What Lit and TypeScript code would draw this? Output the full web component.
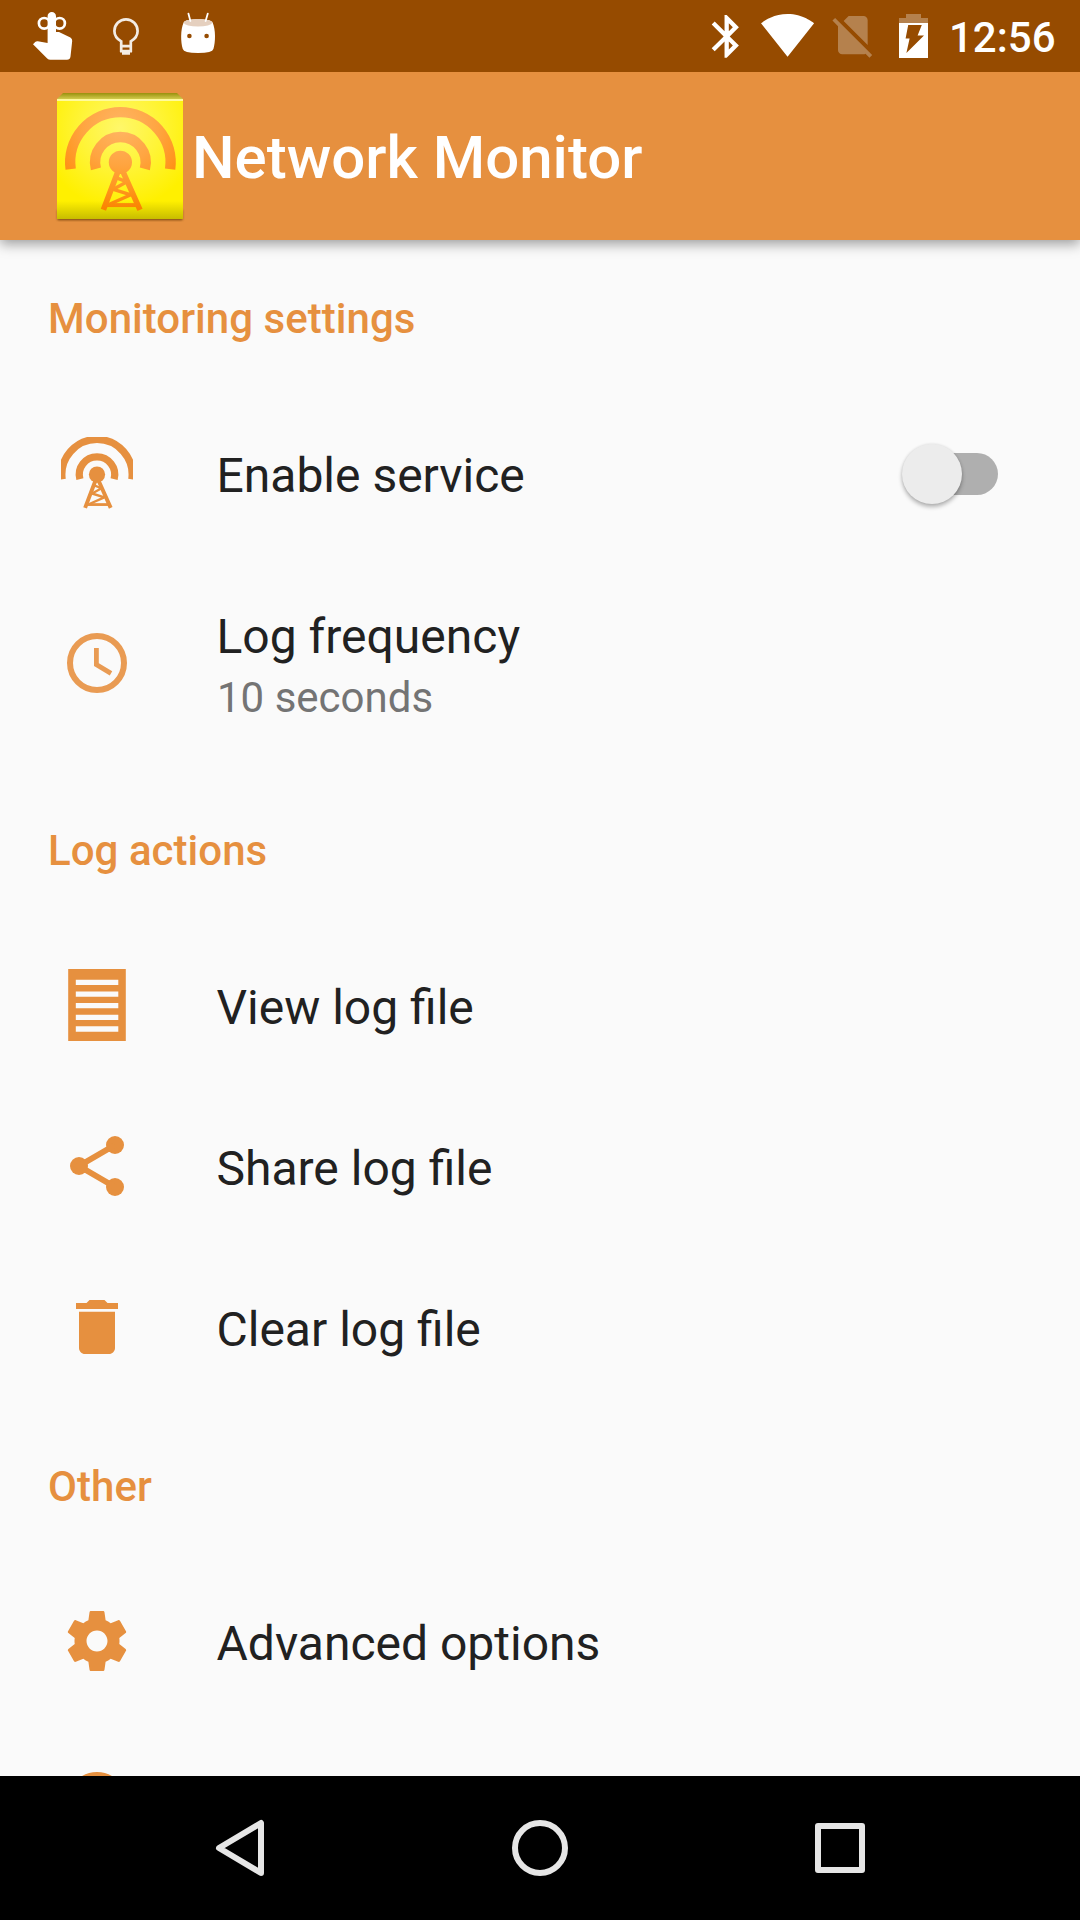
import { LitElement, html, svg, css, nothing } from "lit";
import { customElement, property } from "lit/decorators.js";

/* Radio tower centred on its beacon; outer radius is 55.5 units. */
const tower = (paint: string) => svg`
  <g fill="none" stroke=${paint}>
    <path stroke-width="10.4" d="M-49.74 6.8 A50.2 50.2 0 1 1 49.74 6.8" />
    <path stroke-width="10.4" d="M-24.45 6.5 A25.3 25.3 0 1 1 24.45 6.5" />
    <path stroke-width="5.6" d="M-2 8 L-17 47.5 M2 8 L19.6 47.5" />
    <path stroke-width="4" d="M-14 42.8 H16" />
    <path stroke-width="3.4" stroke-linejoin="bevel" d="M-5 15 L6.5 19.5 L-7 27 L10.5 32.5 L-11 42" />
  </g>
  <circle r="11.6" fill=${paint} />`;

const icons = {
  tower: svg`<g transform="translate(36 37.6) scale(.7)">${tower("currentColor")}</g>`,
  clock: svg`<g fill="none" stroke="#e99b53"><circle cx="36" cy="36" r="27" stroke-width="6" />
    <path stroke-width="4.8" d="M35.4 21 V37.6 L50 46.4" /></g>`,
  list: svg`<path fill="currentColor" fill-rule="evenodd" d="M7.2 0H64.8V72H7.2Z
    M14.8 10.7V16H57.3V10.7Z M14.8 22.4V27.7H57.3V22.4Z M14.8 34.1V39.3H57.3V34.1Z
    M14.8 45.7V51H57.3V45.7Z M14.8 57.3V62.7H57.3V57.3Z" />`,
  share: svg`<g fill="currentColor"><circle cx="18" cy="36" r="9" /><circle cx="54" cy="15" r="9" /><circle cx="54" cy="57" r="9" />
    <path fill="none" stroke="currentColor" stroke-width="6" d="M54 15 L18 36 L54 57" /></g>`,
  trash: svg`<path transform="scale(3)" fill="currentColor" d="M6 19c0 1.1.9 2 2 2h8c1.1 0 2-.9 2-2V6.9H6V19zM19 4h-3.5l-1-1h-5l-1 1H5v2h14V4z" />`,
  gear: svg`<path transform="scale(3)" fill="currentColor" d="M19.43 12.98c.04-.32.07-.64.07-.98s-.03-.66-.07-.98l2.11-1.65c.19-.15.24-.42.12-.64l-2-3.46c-.12-.22-.39-.3-.61-.22l-2.49 1c-.52-.4-1.08-.73-1.69-.98l-.38-2.65C14.46 2.18 14.25 2 14 2h-4c-.25 0-.46.18-.49.42l-.38 2.65c-.61.25-1.17.59-1.69.98l-2.49-1c-.23-.09-.49 0-.61.22l-2 3.46c-.13.22-.07.49.12.64l2.11 1.65c-.04.32-.07.65-.07.98s.03.66.07.98l-2.11 1.65c-.19.15-.24.42-.12.64l2 3.46c.12.22.39.3.61.22l2.49-1c.52.4 1.08.73 1.69.98l.38 2.65c.03.24.24.42.49.42h4c.25 0 .46-.18.49-.42l.38-2.65c.61-.25 1.17-.59 1.69-.98l2.49 1c.23.09.49 0 .61-.22l2-3.46c.12-.22.07-.49-.12-.64l-2.11-1.65zM12 15.5c-1.93 0-3.5-1.57-3.5-3.5s1.57-3.5 3.5-3.5 3.5 1.57 3.5 3.5-1.57 3.5-3.5 3.5z" />`,
  info: svg`<path transform="scale(3)" fill="currentColor" d="M12 2C6.48 2 2 6.48 2 12s4.48 10 10 10 10-4.48 10-10S17.52 2 12 2zm1 15h-2v-6h2v6zm0-8h-2V7h2v2z" />`,
};

type IconName = keyof typeof icons;
interface Item { icon: IconName; title: string; summary?: string; toggle?: boolean; }
interface Section { title: string; items: Item[]; }

const sections: Section[] = [
  { title: "Monitoring settings", items: [
    { icon: "tower", title: "Enable service", toggle: true },
    { icon: "clock", title: "Log frequency", summary: "10 seconds" },
  ] },
  { title: "Log actions", items: [
    { icon: "list", title: "View log file" },
    { icon: "share", title: "Share log file" },
    { icon: "trash", title: "Clear log file" },
  ] },
  { title: "Other", items: [
    { icon: "gear", title: "Advanced options" },
    { icon: "info", title: "" },
  ] },
];

@customElement("status-bar")
class StatusBar extends LitElement {
  static styles = css`
    :host { display: flex; justify-content: space-between; height: 72px; background: #964b00; color: #fff; }
    .group { display: flex; }
    svg { display: block; height: 72px; flex: none; }
    .time { width: 132px; box-sizing: border-box; padding-left: 1px; font-size: 42px; font-weight: 500; line-height: 76px; white-space: nowrap; }
  `;
  render() {
    return html`
      <div class="group">
        <svg width="92" viewBox="0 0 92 72">
          <path fill="#fff" d="M47.6 44.2V16.2a4.2 4.2 0 0 1 8.4 0V32H59L70.4 37.6Q72.4 38.8 72.2 41L70.5 56.6Q70 59.8 67 59.8H50.4Q48.6 59.8 47.2 58.4L33 44.3L35.2 42Q36.2 41 37.8 41.2L47.6 43Z" />
          <g fill="none" stroke="#fff" stroke-width="2.7"><circle cx="44.2" cy="23.3" r="5.3" /><circle cx="59.6" cy="23.3" r="5.3" /></g>
        </svg>
        <svg width="68" viewBox="92 0 68 72">
          <path fill="none" stroke="#f3ece4" stroke-width="2.7" d="M121.2 52V41.4C117 39 114.4 35.4 114.4 31A11.6 11.6 0 0 1 137.6 31C137.6 35.4 135 39 130.8 41.4V52" />
          <path fill="#f3ece4" d="M120 44.8H132V47.4H120ZM120 49.8H132V52.6H130V54.8H122V52.6H120Z" />
        </svg>
        <svg width="68" viewBox="160 0 68 72">
          <path fill="#fff" d="M183.6 22.5C184 18 212.4 18 212.6 22.5C215.8 30 215.6 42 213.4 49Q212.6 52.8 198 53Q183.6 52.8 182.8 49C180.6 42 180.4 30 183.6 22.5Z" />
          <ellipse cx="198" cy="22.7" rx="14" ry="3.8" fill="#e5d0bf" />
          <path stroke="#fff" stroke-width="1.8" stroke-linecap="round" d="M188.4 13.6L190.4 21M207.8 13.6L205.6 21" />
          <g fill="#964b00"><circle cx="189.4" cy="36" r="2.3" /><circle cx="206.6" cy="36" r="2.3" /></g>
        </svg>
      </div>
      <div class="group">
        <svg width="50" viewBox="700 0 50 72">
          <path fill="#fff" transform="translate(701 10.7) scale(2.14)" d="M17.71 7.71L12 2h-1v7.59L6.41 5 5 6.41 10.59 12 5 17.59 6.41 19 11 14.41V22h1l5.71-5.71-4.3-4.29 4.3-4.29zM13 5.83l1.88 1.88L13 9.59V5.83zm1.88 10.46L13 18.17v-3.76l1.88 1.88z" />
        </svg>
        <svg width="74" viewBox="750 0 74 72">
          <path fill="#fff" transform="translate(760.2 7.2) scale(2.28 2.3)" d="M12.01 21.49L23.64 7c-.45-.34-4.93-4-11.64-4C5.28 3 .81 6.66.36 7l11.63 14.49.01.01.01-.01z" />
        </svg>
        <svg width="66" viewBox="824 0 66 72">
          <path fill="#b5814d" transform="translate(827.4 9.7) scale(2.12)" d="M18.99 5c0-1.1-.89-2-1.99-2h-7L7.66 5.34 19 16.68 18.99 5zM3.65 3.88L2.38 5.15 5 7.77V19c0 1.1.9 2 2 2h10.01c.35 0 .67-.1.96-.26l1.88 1.88 1.27-1.27L3.65 3.88z" />
        </svg>
        <svg width="58" viewBox="890 0 58 72">
          <path fill="#b5814d" d="M906 14H921V18H928V23H899V18H906Z" />
          <path fill="#fff" fill-rule="evenodd" d="M899 23H928V58H899ZM908.2 25L905.6 38.6H909.6L906.4 53L924 35.4H917.6L921.8 25Z" />
        </svg>
        <div class="time">12:56</div>
      </div>`;
  }
}

@customElement("app-bar")
class AppBar extends LitElement {
  static styles = css`
    :host { display: flex; align-items: center; height: 168px; box-sizing: border-box; padding-left: 54px; background: #e6903f; box-shadow: 0 4px 12px rgba(0, 0, 0, 0.38); }
    svg { display: block; flex: none; }
    .title { margin: 0 0 0 6px; padding-top: 4px; font-size: 60px; font-weight: 500; line-height: 70px; color: #fff; white-space: nowrap; }
  `;
  render() {
    return html`
      <svg width="132" height="132" viewBox="54 90 132 132">
        <defs>
          <radialGradient id="face" gradientUnits="userSpaceOnUse" cx="120" cy="128" r="80">
            <stop offset="0" stop-color="#fff76a" /><stop offset=".5" stop-color="#fff437" /><stop offset="1" stop-color="#fff000" />
          </radialGradient>
          <linearGradient id="base" x1="0" y1="0" x2="0" y2="1">
            <stop offset="0" stop-color="#c8bd00" stop-opacity="0" /><stop offset="1" stop-color="#c8bd00" />
          </linearGradient>
          <linearGradient id="lip" x1="0" y1="0" x2="0" y2="1">
            <stop offset="0" stop-color="#99900c" /><stop offset="1" stop-color="#d2ca4c" />
          </linearGradient>
          <radialGradient id="mast" gradientUnits="userSpaceOnUse" cx="0" cy="-36" r="84">
            <stop offset="0" stop-color="#ffb564" /><stop offset=".45" stop-color="#ffa541" /><stop offset=".75" stop-color="#ff951e" /><stop offset="1" stop-color="#fa8400" />
          </radialGradient>
          <filter id="soft" x="-10%" y="-10%" width="120%" height="120%"><feGaussianBlur stdDeviation="1" /></filter>
        </defs>
        <rect x="57.5" y="210" width="125" height="10.2" fill="#5c3000" opacity=".75" filter="url(#soft)" />
        <path fill="url(#lip)" d="M63 93H177L183 99H57Z" />
        <rect x="57" y="99" width="126" height="120" fill="url(#face)" />
        <rect x="57" y="99" width="126" height="2" fill="#fffa9c" />
        <rect x="57" y="201" width="126" height="18" fill="url(#base)" />
        <g transform="translate(120.4 162.3)">${tower("url(#mast)")}</g>
      </svg>
      <h1 class="title">Network Monitor</h1>`;
  }
}

@customElement("toggle-switch")
class ToggleSwitch extends LitElement {
  static styles = css`
    :host { display: grid; align-items: center; width: 96px; height: 60px; padding-top: 2px; }
    .track, .thumb { grid-area: 1 / 1; }
    .track { justify-self: end; width: 84px; height: 42px; border-radius: 21px; background: #afafaf; }
    .thumb { width: 60px; height: 60px; border-radius: 50%; background: #ececec; box-shadow: 0 3px 4px rgba(0, 0, 0, 0.28), 0 0 3px rgba(0, 0, 0, 0.1); }
  `;
  render() {
    return html`<div class="track"></div><div class="thumb"></div>`;
  }
}

@customElement("preference-row")
class PreferenceRow extends LitElement {
  @property({ attribute: false }) item!: Item;
  static styles = css`
    :host { display: block; color: #e6903f; }
    .row { display: flex; align-items: center; height: 161px; box-sizing: border-box; padding: 0 82px 1px 61px; }
    .tall { height: 218px; padding-bottom: 0; }
    .icon { display: block; flex: none; }
    .text { flex: 1; margin-left: 83.5px; padding-top: 5px; white-space: nowrap; }
    .tall .text { padding-top: 4px; }
    .title { font-size: 48px; line-height: 64px; color: #212121; }
    .summary { padding: 1px 0 0 0.5px; font-size: 42px; line-height: 56px; color: #747474; }
  `;
  render() {
    const { icon, title, summary, toggle } = this.item;
    return html`
      <div class="row ${summary ? "tall" : ""}">
        <svg class="icon" width="72" height="72" viewBox="0 0 72 72">${icons[icon]}</svg>
        <div class="text">
          <div class="title">${title}</div>
          ${summary ? html`<div class="summary">${summary}</div>` : nothing}
        </div>
        ${toggle ? html`<toggle-switch></toggle-switch>` : nothing}
      </div>`;
  }
}

@customElement("nav-bar")
class NavBar extends LitElement {
  static styles = css`
    :host { display: flex; justify-content: space-between; align-items: center; height: 144px; box-sizing: border-box; padding: 0 210px; background: #000; }
    svg { display: block; fill: none; stroke: #e6e6e6; stroke-width: 6; stroke-linejoin: round; }
  `;
  render() {
    return html`
      <svg width="60" height="60" viewBox="0 0 60 60"><path d="M9 30L51 5V55Z" /></svg>
      <svg width="60" height="60" viewBox="0 0 60 60"><circle cx="30" cy="30" r="25" /></svg>
      <svg width="60" height="60" viewBox="0 0 60 60"><rect x="8" y="8" width="44" height="44" /></svg>`;
  }
}

@customElement("app-root")
class AppRoot extends LitElement {
  static styles = css`
    :host { display: flex; flex-direction: column; width: 1080px; height: 1920px; overflow: hidden; background: #fafafa; font-family: Roboto, "Liberation Sans", sans-serif; }
    status-bar, nav-bar { flex: none; }
    status-bar { z-index: 2; }
    app-bar { flex: none; z-index: 1; }
    .list { flex: 1; min-height: 0; overflow: hidden; }
    .heading { margin: 0; height: 153px; box-sizing: border-box; padding: 51px 48px 0; font-size: 42px; font-weight: 500; line-height: 56px; letter-spacing: 0.04px; color: #e6903f; }
  `;
  render() {
    return html`
      <status-bar></status-bar>
      <app-bar></app-bar>
      <main class="list">
        ${sections.map((s) => html`
          <h2 class="heading">${s.title}</h2>
          ${s.items.map((item) => html`<preference-row .item=${item}></preference-row>`)}`)}
      </main>
      <nav-bar></nav-bar>`;
  }
}
